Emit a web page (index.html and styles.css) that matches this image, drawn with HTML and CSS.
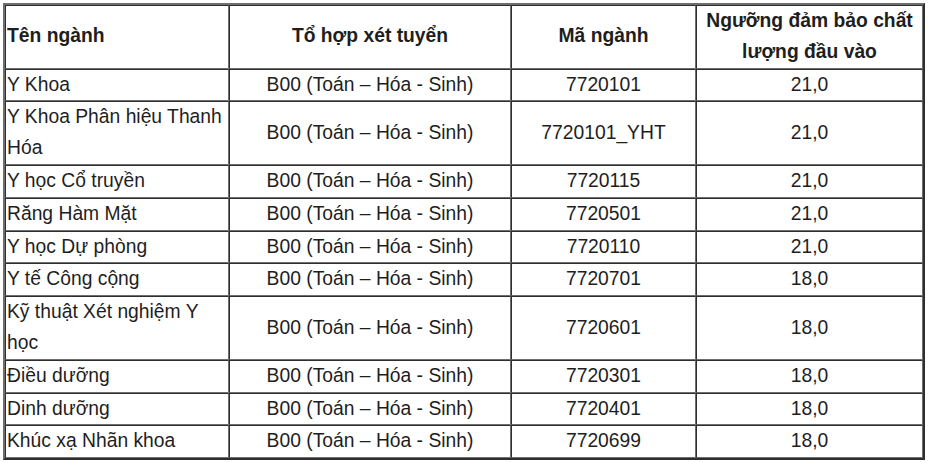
FILE: index.html
```html
<!DOCTYPE html>
<html lang="vi">
<head>
<meta charset="utf-8">
<title>Ngưỡng đảm bảo chất lượng đầu vào</title>
<link rel="stylesheet" href="styles.css">
</head>
<body>
<div class="wrap">
<table class="grid">
  <colgroup>
    <col class="c1"><col class="c2"><col class="c3"><col class="c4">
  </colgroup>
  <thead>
    <tr>
      <th class="left">Tên ngành</th>
      <th>Tổ hợp xét tuyển</th>
      <th>Mã ngành</th>
      <th>Ngưỡng đảm bảo chất lượng đầu vào</th>
    </tr>
  </thead>
  <tbody>
    <tr><td class="left">Y Khoa</td><td>B00 (Toán – Hóa - Sinh)</td><td>7720101</td><td>21,0</td></tr>
    <tr><td class="left">Y Khoa Phân hiệu Thanh Hóa</td><td>B00 (Toán – Hóa - Sinh)</td><td>7720101_YHT</td><td>21,0</td></tr>
    <tr><td class="left">Y học Cổ truyền</td><td>B00 (Toán – Hóa - Sinh)</td><td>7720115</td><td>21,0</td></tr>
    <tr><td class="left">Răng Hàm Mặt</td><td>B00 (Toán – Hóa - Sinh)</td><td>7720501</td><td>21,0</td></tr>
    <tr><td class="left">Y học Dự phòng</td><td>B00 (Toán – Hóa - Sinh)</td><td>7720110</td><td>21,0</td></tr>
    <tr><td class="left">Y tế Công cộng</td><td>B00 (Toán – Hóa - Sinh)</td><td>7720701</td><td>18,0</td></tr>
    <tr><td class="left">Kỹ thuật Xét nghiệm Y học</td><td>B00 (Toán – Hóa - Sinh)</td><td>7720601</td><td>18,0</td></tr>
    <tr><td class="left">Điều dưỡng</td><td>B00 (Toán – Hóa - Sinh)</td><td>7720301</td><td>18,0</td></tr>
    <tr><td class="left">Dinh dưỡng</td><td>B00 (Toán – Hóa - Sinh)</td><td>7720401</td><td>18,0</td></tr>
    <tr><td class="left">Khúc xạ Nhãn khoa</td><td>B00 (Toán – Hóa - Sinh)</td><td>7720699</td><td>18,0</td></tr>
  </tbody>
</table>
</div>
</body>
</html>
```
FILE: styles.css
```css
html, body {
  margin: 0;
  padding: 0;
  background: #ffffff;
}

.wrap {
  padding: 3px 3px 0 3px;
}

.grid {
  width: 922px;
  table-layout: fixed;
  border-collapse: separate;
  border-spacing: 0;
  border-style: solid;
  border-width: 2px;
  border-color: #6e6e6e #2e2e2e #2e2e2e #6e6e6e;
  font-family: "Liberation Sans", Arial, sans-serif;
  font-size: 19.3px;
  line-height: 30.8px;
  color: #1e1e1e;
}

.c1 { width: 224px; }
.c2 { width: 282px; }
.c3 { width: 185px; }
.c4 { width: 227px; }

.grid th,
.grid td {
  padding: 0 1px;
  border-style: solid;
  border-width: 1px;
  border-color: #2e2e2e #6e6e6e #6e6e6e #2e2e2e;
  text-align: center;
  vertical-align: middle;
}

.grid th {
  font-weight: bold;
}

.grid .left {
  text-align: left;
}
```
